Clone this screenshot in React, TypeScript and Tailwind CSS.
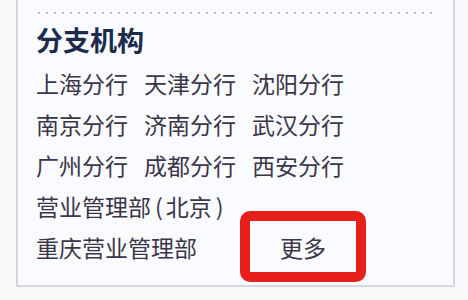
const rows = [
  ["上海分行", "天津分行", "沈阳分行"],
  ["南京分行", "济南分行", "武汉分行"],
  ["广州分行", "成都分行", "西安分行"],
];

export default function App() {
  return (
    <div
      className="w-[468px] h-[300px] bg-[#f8f8fa] pl-[16px] overflow-hidden"
      style={{ fontFamily: '"Noto Sans CJK SC", "Noto Sans", sans-serif' }}
    >
      <div className="w-[439px] h-[287px] bg-[#fafbfe] border-x-2 border-b-2 border-[#d4d7df] pt-[12px] pl-[18px]">
        {/* dotted divider */}
        <div className="ml-[2px] w-[394px] h-[2px] bg-[linear-gradient(to_right,#b9bac2_2px,transparent_2px)] bg-[length:8px_2px]" />

        <h2 className="mt-[9px] text-[27px] leading-[34px] font-bold text-[#1c2b4c]">分支机构</h2>

        <div className="mt-[6px] text-[23px] leading-[41px] text-[#3b3548]">
          {rows.map((row, i) => (
            <div key={i} className="flex gap-[16px]">
              {row.map((name) => (
                <span key={name}>{name}</span>
              ))}
            </div>
          ))}
          <div className="flex">
            <span>营业管理部</span>
            <span className="ml-[4px] mr-[3px]">(</span>
            <span>北京</span>
            <span className="ml-[4px]">)</span>
          </div>
          <div className="flex">
            <span>重庆营业管理部</span>
            <span className="relative ml-[83px]">
              更多
              <span className="absolute left-[-40px] right-[-40px] top-[-16px] bottom-[-14px] border-[10px] border-[#e8201c] rounded-[10px]" />
            </span>
          </div>
        </div>
      </div>
    </div>
  );
}
